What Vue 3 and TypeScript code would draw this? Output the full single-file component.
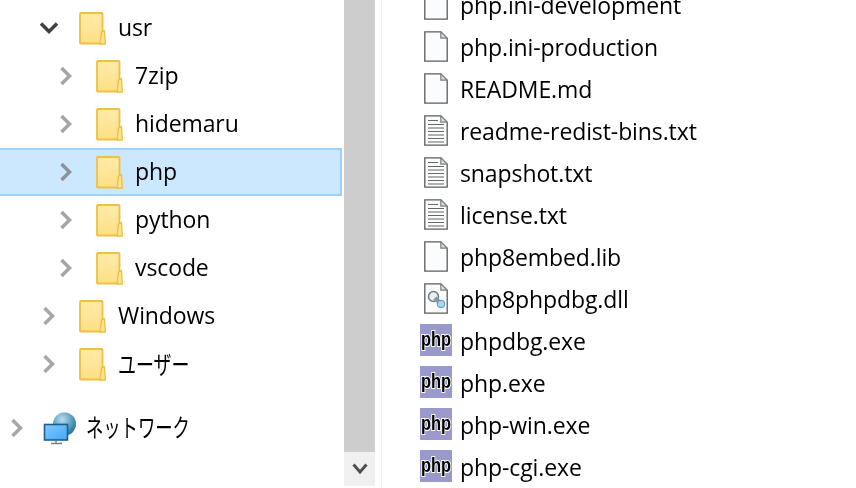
<script setup lang="ts">
type TreeRow = { name: string; depth: number; open?: boolean; selected?: boolean; jp?: boolean }
type FileRow = { name: string; kind: 'blank' | 'text' | 'dll' | 'php' }

const tree: TreeRow[] = [
  { name: 'usr', depth: 1, open: true },
  { name: '7zip', depth: 2 },
  { name: 'hidemaru', depth: 2 },
  { name: 'php', depth: 2, selected: true },
  { name: 'python', depth: 2 },
  { name: 'vscode', depth: 2 },
  { name: 'Windows', depth: 1 },
  { name: 'ユーザー', depth: 1, jp: true },
]

const files: FileRow[] = [
  { name: 'php.ini-development', kind: 'blank' },
  { name: 'php.ini-production', kind: 'blank' },
  { name: 'README.md', kind: 'blank' },
  { name: 'readme-redist-bins.txt', kind: 'text' },
  { name: 'snapshot.txt', kind: 'text' },
  { name: 'license.txt', kind: 'text' },
  { name: 'php8embed.lib', kind: 'blank' },
  { name: 'php8phpdbg.dll', kind: 'dll' },
  { name: 'phpdbg.exe', kind: 'php' },
  { name: 'php.exe', kind: 'php' },
  { name: 'php-win.exe', kind: 'php' },
  { name: 'php-cgi.exe', kind: 'php' },
]
</script>

<template>
  <div class="window">
    <nav class="tree">
      <div
        v-for="row in tree"
        :key="row.name"
        class="tree-row"
        :class="[`depth-${row.depth}`, { selected: row.selected }]"
      >
        <span class="twisty">
          <svg v-if="row.open" width="22" height="14" viewBox="0 0 22 14">
            <path d="M3 2.500 11 10.500l8-8" fill="none" stroke="#404040" stroke-width="3.500" />
          </svg>
          <svg v-else width="14" height="22" viewBox="0 0 14 22">
            <path
              d="M2.500 3 10.500 11l-8 8"
              fill="none"
              :stroke="row.selected ? '#8c9299' : '#a6a6a6'"
              stroke-width="3.500"
            />
          </svg>
        </span>
        <svg class="folder" width="27" height="33" viewBox="0 0 27 33">
          <defs>
            <linearGradient id="folder-fill" x1="0" y1="0" x2="0" y2="1">
              <stop offset="0" stop-color="#ffeaa6" />
              <stop offset="1" stop-color="#ffe088" />
            </linearGradient>
          </defs>
          <rect x="1" y="1" width="22.500" height="30.500" rx="1" fill="url(#folder-fill)" stroke="#eec045" stroke-width="1.800" />
          <path d="M21 32 22.500 20l3-1.500.8 13.500z" fill="#ffe48f" stroke="#eec045" stroke-width="1.400" />
        </svg>
        <span class="tree-label" :class="{ 'jp-label': row.jp }">{{ row.name }}</span>
      </div>

      <div class="tree-row network">
        <span class="twisty">
          <svg width="14" height="22" viewBox="0 0 14 22">
            <path d="M2.500 3 10.500 11l-8 8" fill="none" stroke="#a6a6a6" stroke-width="3.500" />
          </svg>
        </span>
        <svg class="globe" width="34" height="33" viewBox="0 0 34 33">
          <defs>
            <radialGradient id="globe-fill" cx="0.4" cy="0.3" r="0.8">
              <stop offset="0" stop-color="#b9deee" />
              <stop offset="0.6" stop-color="#4d97bb" />
              <stop offset="1" stop-color="#1f6287" />
            </radialGradient>
            <linearGradient id="screen-fill" x1="0" y1="0" x2="1" y2="1">
              <stop offset="0" stop-color="#7fcbff" />
              <stop offset="1" stop-color="#45a6f2" />
            </linearGradient>
          </defs>
          <circle cx="21.500" cy="12" r="11.500" fill="url(#globe-fill)" />
          <rect x="1.500" y="12.500" width="23" height="15.500" fill="url(#screen-fill)" stroke="#1d5f8d" stroke-width="1.600" />
          <path d="M8 31.500h11M13 28v3" stroke="#6f8190" stroke-width="1.500" />
        </svg>
        <span class="tree-label jp-label network-label">ネットワーク</span>
      </div>
    </nav>

    <div class="scrollbar">
      <div class="scroll-track"></div>
      <div class="scroll-down">
        <svg width="16" height="12" viewBox="0 0 16 12">
          <path d="M1.500 1.500 8 9l6.500-7.500" fill="none" stroke="#505050" stroke-width="3" />
        </svg>
      </div>
    </div>

    <main class="files">
      <div v-for="file in files" :key="file.name" class="file-row">
        <span class="file-icon">
          <svg v-if="file.kind === 'php'" width="32" height="32" viewBox="0 0 32 32">
            <rect width="32" height="32" fill="#9999cc" />
            <text class="php-mark" x="16" y="22" text-anchor="middle" textLength="30" lengthAdjust="spacingAndGlyphs">php</text>
          </svg>
          <svg v-else width="24" height="31" viewBox="0 0 24 31">
            <path d="M.8.800h16l6.400 6.400v23H.8z" fill="#fbfcfd" stroke="#5c5c5c" stroke-width="1.300" />
            <path d="M16.800.800v6.400h6.400z" fill="#dcdcdc" stroke="#808080" stroke-width="1.200" />
            <g v-if="file.kind === 'text'" stroke="#666" stroke-width="1">
              <path d="M4 5.500h10M4 9.500h16M4 13h16M4 16.500h16M4 20h16M4 23.500h16M4 27h16" />
            </g>
            <g v-if="file.kind === 'dll'">
              <circle cx="9.500" cy="13.500" r="5" fill="#e8eef2" stroke="#6f7a82" stroke-width="1.500" />
              <path d="M11 15 17 21" stroke="#7e98aa" stroke-width="4.500" />
              <circle cx="17" cy="21" r="3.800" fill="#a8d6f0" stroke="#5c93b5" stroke-width="1" />
            </g>
          </svg>
        </span>
        <span class="file-name">{{ file.name }}</span>
      </div>
    </main>
  </div>
</template>

<style scoped>
.window {
  display: flex;
  width: 856px;
  height: 488px;
  overflow: hidden;
  background: #fff;
  color: #000;
  font-family: "Open Sans", "Noto Sans CJK JP", sans-serif;
  font-size: 23px;
  letter-spacing: -0.1px;
  filter: blur(0.3px);
}

.tree {
  flex: none;
  width: 344px;
  padding-top: 4px;
  box-sizing: border-box;
}

.tree-row {
  display: flex;
  align-items: center;
  width: 342px;
  height: 48px;
  box-sizing: border-box;
}

.depth-1 { padding-left: 36px; }
.depth-2 { padding-left: 53px; }

.selected {
  background: #cce8ff;
  border: solid #99d1ff;
  border-width: 2px 2px 2px 0;
}

.twisty {
  display: flex;
  flex: none;
  justify-content: center;
  align-items: center;
  width: 26px;
  margin-right: 17px;
}

.folder {
  flex: none;
}

.tree-label {
  margin-left: 12px;
  padding-bottom: 2px;
  white-space: nowrap;
}

.jp-label {
  display: inline-block;
  transform: scaleX(0.72);
  transform-origin: left center;
  font-size: 25px;
}

.network {
  margin-top: 16px;
  padding-left: 4px;
}

.network .twisty {
  margin-right: 13px;
}

.globe {
  flex: none;
}

.network-label {
  margin-left: 9px;
  padding-bottom: 4px;
  transform: scaleX(0.695);
}

.scrollbar {
  display: flex;
  flex: none;
  flex-direction: column;
  width: 31px;
  height: 486px;
}

.scroll-track {
  flex: 1;
  background: #cdcdcd;
}

.scroll-down {
  display: flex;
  flex: none;
  justify-content: center;
  align-items: center;
  height: 34px;
  background: #f0f0f0;
}

.files {
  flex: 1;
  margin-left: 6px;
  margin-top: -17px;
  padding-left: 38px;
  border-left: 1px solid #f0f0f0;
}

.file-row {
  display: flex;
  align-items: center;
  height: 42px;
}

.file-icon {
  display: flex;
  flex: none;
  justify-content: center;
  width: 32px;
  margin-right: 8px;
}

.file-name {
  padding-top: 2px;
  white-space: nowrap;
}

.php-mark {
  font-family: "Liberation Sans", sans-serif;
  font-size: 20px;
  font-weight: 700;
  fill: #000;
  stroke: #fff;
  stroke-width: 2px;
  paint-order: stroke;
}
</style>
